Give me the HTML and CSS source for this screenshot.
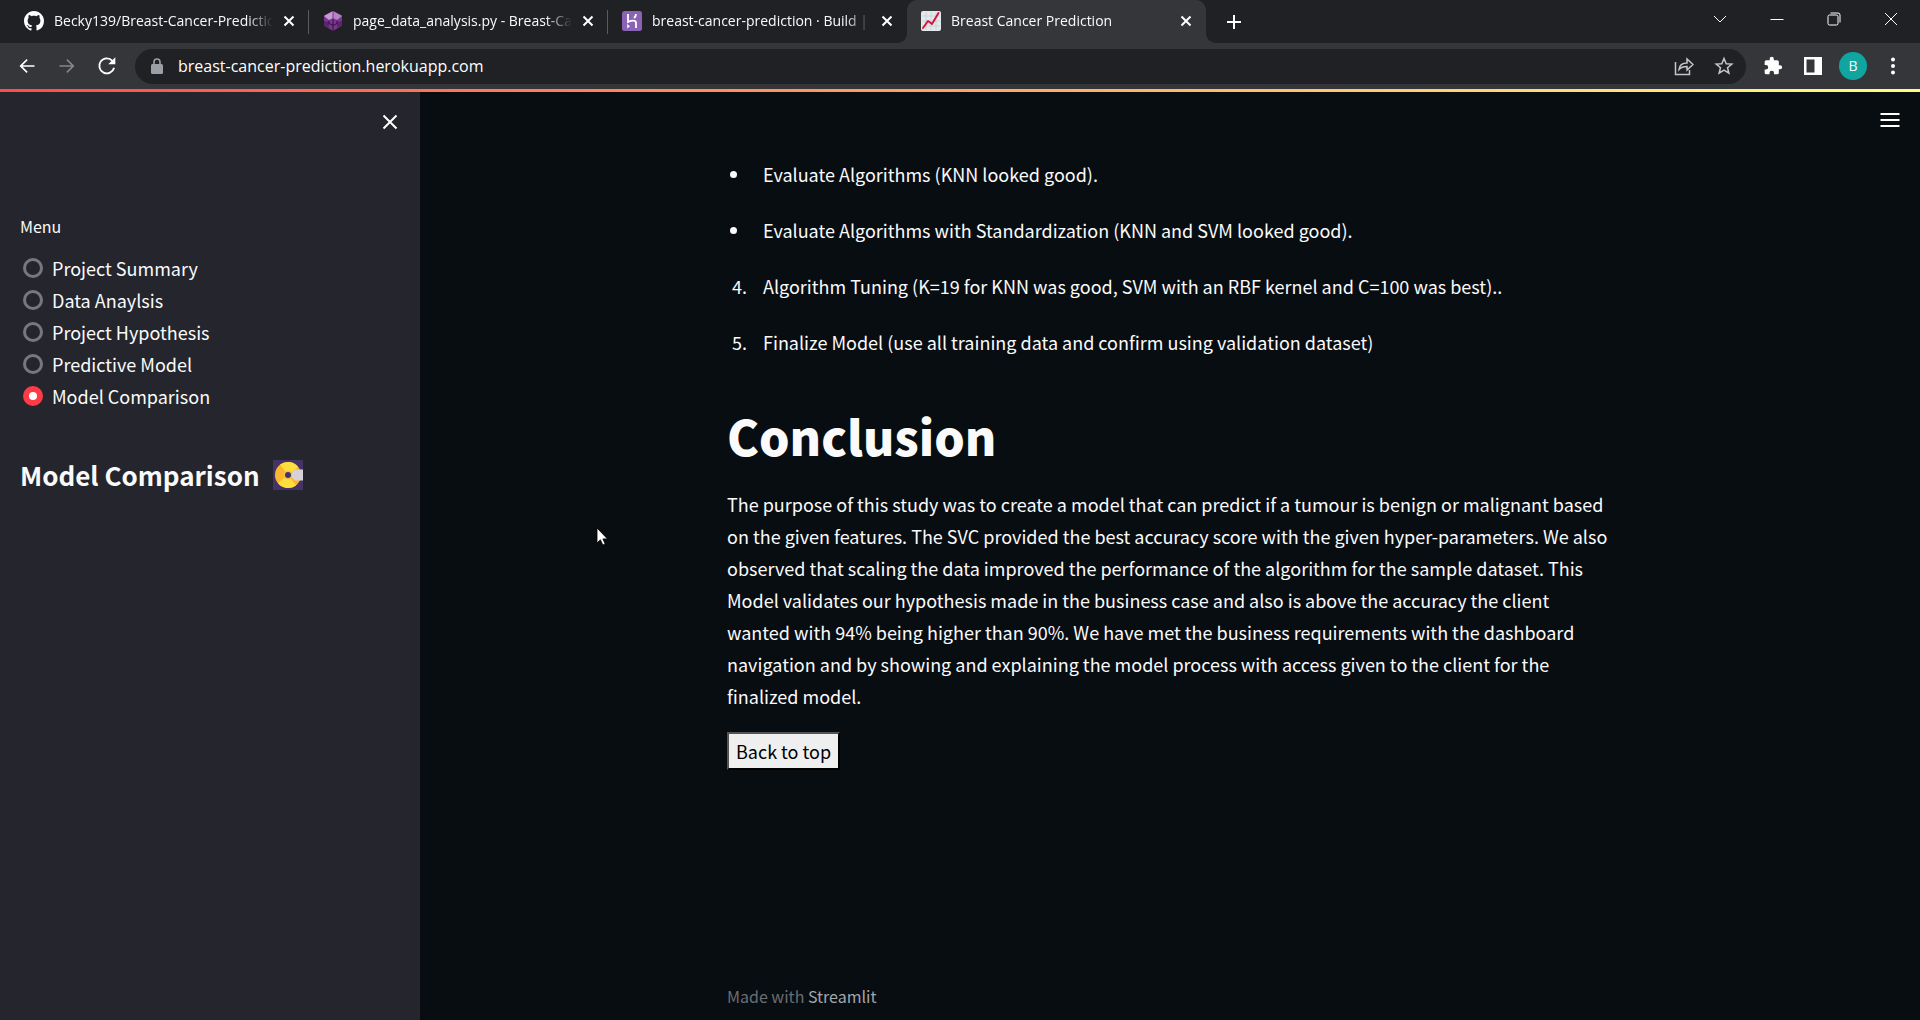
FILE: index.html
```html
<!DOCTYPE html>
<html lang="en">
<head>
<meta charset="utf-8">
<title>Breast Cancer Prediction</title>
<link rel="stylesheet" href="styles.css">
</head>
<body>
<header class="browser">
  <div class="tabstrip">
    <div class="tab">
      <svg class="favicon" viewBox="0 0 16 16" aria-hidden="true"><path fill="#fff" d="M8 0C3.58 0 0 3.58 0 8c0 3.54 2.29 6.53 5.47 7.59.4.07.55-.17.55-.38 0-.19-.01-.82-.01-1.49-2.01.37-2.53-.49-2.69-.94-.09-.23-.48-.94-.82-1.13-.28-.15-.68-.52-.01-.53.63-.01 1.08.58 1.23.82.72 1.21 1.87.87 2.33.66.07-.52.28-.87.51-1.07-1.78-.2-3.64-.89-3.64-3.95 0-.87.31-1.59.82-2.15-.08-.2-.36-1.02.08-2.12 0 0 .67-.21 2.2.82.64-.18 1.32-.27 2-.27s1.36.09 2 .27c1.53-1.04 2.2-.82 2.2-.82.44 1.1.16 1.92.08 2.12.51.56.82 1.27.82 2.15 0 3.07-1.87 3.75-3.65 3.95.29.25.54.73.54 1.48 0 1.07-.01 1.93-.01 2.2 0 .21.15.46.55.38A8.01 8.01 0 0 0 16 8c0-4.42-3.58-8-8-8z"/></svg>
      <span class="tab-title">Becky139/Breast-Cancer-Prediction</span>
      <button class="tab-close" aria-label="Close tab"><svg viewBox="0 0 12 12"><path d="M1.500 1.500l9 9M10.500 1.500l-9 9"/></svg></button>
    </div>
    <div class="tab">
      <svg class="favicon" viewBox="0 0 20 20" aria-hidden="true"><path fill="#7a3790" d="M10 0l9 4.500v10L10 20l-9-5.500v-10z"/><path fill="#c69ad2" d="M9.500 .3v7L6 9 1 5z"/><path fill="#b582c4" d="M10.500 .3v7L14 9l5-4z"/><path fill="#5b2370" d="M1 10l5 1v6L1 14zM19 10l-5 1v6l5-3z"/><path fill="none" stroke="#35123f" d="M10 8v12M6 9.500v3l4 2 4-2v-3"/></svg>
      <span class="tab-title">page_data_analysis.py - Breast-Cancer</span>
      <button class="tab-close" aria-label="Close tab"><svg viewBox="0 0 12 12"><path d="M1.500 1.500l9 9M10.500 1.500l-9 9"/></svg></button>
    </div>
    <div class="tab">
      <svg class="favicon" viewBox="0 0 20 20" aria-hidden="true"><rect width="20" height="20" rx="2.500" fill="#8b63b5"/><path fill="none" stroke="#fff" stroke-width="1.800" d="M6 3v8c3-1.500 8-2.500 8 1v5M14 3c0 2-1 3.200-2 4"/><path fill="#fff" d="M5.200 13l2.800 2.200-2.800 2.300z"/></svg>
      <span class="tab-title">breast-cancer-prediction · Build | Heroku</span>
      <button class="tab-close" aria-label="Close tab"><svg viewBox="0 0 12 12"><path d="M1.500 1.500l9 9M10.500 1.500l-9 9"/></svg></button>
    </div>
    <div class="tab tab-active">
      <svg class="favicon" viewBox="0 0 20 20" aria-hidden="true"><rect width="20" height="20" rx="2" fill="#e4e9ec"/><path stroke="#bccbd2" stroke-width=".6" d="M5 1v18M10 1v18M15 1v18M1 5h18M1 10h18M1 15h18"/><path fill="none" stroke="#d4183c" stroke-width="2" stroke-linejoin="round" stroke-linecap="round" d="M2 17l5-7 4 3 6.500-11"/></svg>
      <span class="tab-title">Breast Cancer Prediction</span>
      <button class="tab-close" aria-label="Close tab"><svg viewBox="0 0 12 12"><path d="M1.500 1.500l9 9M10.500 1.500l-9 9"/></svg></button>
    </div>
    <button class="new-tab" aria-label="New tab"><svg viewBox="0 0 16 16"><path d="M8 1v14M1 8h14"/></svg></button>
    <div class="window-controls">
      <button aria-label="Search tabs"><svg viewBox="0 0 14 14"><path d="M1 4l6 6 6-6"/></svg></button>
      <button aria-label="Minimize"><svg viewBox="0 0 14 14"><path d="M.5 7.500h13"/></svg></button>
      <button aria-label="Restore"><svg viewBox="0 0 14 14"><rect x="1" y="3" width="10" height="10" rx="1.500"/><path d="M3.500 1h7.500a2 2 0 0 1 2 2v7.500"/></svg></button>
      <button aria-label="Close"><svg viewBox="0 0 14 14"><path d="M1 1l12 12M13 1L1 13"/></svg></button>
    </div>
  </div>
  <div class="toolbar">
    <button class="tool" aria-label="Back"><svg viewBox="0 0 24 24"><path fill="#fff" d="M21 11H6.800l6-6L11.500 3.500 3 12l8.500 8.500 1.300-1.500-6-6H21z"/></svg></button>
    <button class="tool" aria-label="Forward"><svg viewBox="0 0 24 24"><path fill="#85868a" d="M3 11h14.200l-6-6 1.300-1.500L21 12l-8.500 8.500-1.300-1.500 6-6H3z"/></svg></button>
    <button class="tool" aria-label="Reload"><svg viewBox="0 0 24 24"><path fill="none" stroke="#fff" stroke-width="2.200" d="M20.500 14A9 9 0 1 1 18.500 5.800"/><path fill="#fff" d="M22 1.500v8.500h-8.500z"/></svg></button>
    <div class="omnibox">
      <svg class="lock" viewBox="0 0 12 16" aria-hidden="true"><rect y="6" width="12" height="10" rx="1.500" fill="#9aa0a6"/><path fill="none" stroke="#9aa0a6" stroke-width="1.600" d="M3 7V4a3 3 0 0 1 6 0v3"/></svg>
      <input class="address" type="text" aria-label="Address" value="breast-cancer-prediction.herokuapp.com">
      <button class="tool" aria-label="Share"><svg class="icon-line" viewBox="0 0 20 20"><path d="M1.500 6v12.500h14V14M5 13.500c.5-4.500 3.500-6.500 8-6.500V3L19 8.500 13 14v-3.500c-3.500 0-6 .8-8 3z"/></svg></button>
      <button class="tool" aria-label="Bookmark"><svg class="icon-line" viewBox="0 0 20 20"><path d="M10 2.500l2.200 5.200 5.600.4-4.300 3.600 1.400 5.500L10 14.200l-4.900 3 1.400-5.500-4.300-3.600 5.600-.4z"/></svg></button>
    </div>
    <button class="tool" aria-label="Extensions"><svg viewBox="0 0 24 24"><path fill="#fff" d="M20.500 11H19V7a2 2 0 0 0-2-2h-4V3.500a2.500 2.500 0 0 0-5 0V5H4a2 2 0 0 0-2 2v3.800h1.500a2.700 2.700 0 0 1 0 5.400H2V20a2 2 0 0 0 2 2h3.800v-1.500a2.700 2.700 0 0 1 5.400 0V22H17a2 2 0 0 0 2-2v-4h1.500a2.500 2.500 0 0 0 0-5z"/></svg></button>
    <button class="tool" aria-label="Side panel"><svg viewBox="0 0 20 20"><path fill="#fff" fill-rule="evenodd" d="M1 1h18v18H1zM3.500 3.500v13h8v-13z"/></svg></button>
    <button class="avatar" aria-label="Profile">B</button>
    <button class="tool" aria-label="More"><svg viewBox="0 0 20 20"><g fill="#fff"><circle cx="10" cy="3.500" r="2"/><circle cx="10" cy="10" r="2"/><circle cx="10" cy="16.500" r="2"/></g></svg></button>
  </div>
</header>

<div class="decoration"></div>

<div class="app">
  <aside class="sidebar">
    <button class="sidebar-close" aria-label="Close sidebar"><svg viewBox="0 0 16 16"><path d="M1.500 1.500l13 13M14.500 1.500l-13 13"/></svg></button>
    <fieldset class="menu">
      <legend>Menu</legend>
      <label><input type="radio" name="menu">Project Summary</label>
      <label><input type="radio" name="menu">Data Anaylsis</label>
      <label><input type="radio" name="menu">Project Hypothesis</label>
      <label><input type="radio" name="menu">Predictive Model</label>
      <label><input type="radio" name="menu" checked>Model Comparison</label>
    </fieldset>
    <h2 class="sidebar-title">Model Comparison
      <svg viewBox="0 0 30 30" aria-hidden="true"><rect width="30" height="30" rx="1" fill="#443466"/><circle cx="15" cy="15" r="13" fill="#fdb62f"/><path fill="#ffdf3c" d="M15 15L7 4.500A13 13 0 0 1 25 7zM15 15l8 10.500A13 13 0 0 1 5 23z"/><circle cx="15" cy="15" r="4.500" fill="#f4c14a"/><circle cx="15" cy="15" r="3" fill="#443466"/><path fill="#d5d3d8" d="M30 9.500h-8l-3 3v5l3 3h8z"/></svg>
    </h2>
  </aside>

  <main class="main">
    <button class="main-menu" aria-label="Main menu"><svg viewBox="0 0 20 16"><path d="M.5 2h19M.5 8h19M.5 14h19"/></svg></button>
    <div class="content">
      <ul class="steps">
        <li>Evaluate Algorithms (KNN looked good).</li>
        <li>Evaluate Algorithms with Standardization (KNN and SVM looked good).</li>
      </ul>
      <ol class="steps" start="4">
        <li>Algorithm Tuning (K=19 for KNN was good, SVM with an RBF kernel and C=100 was best)..</li>
        <li>Finalize Model (use all training data and confirm using validation dataset)</li>
      </ol>
      <h1>Conclusion</h1>
      <p>The purpose of this study was to create a model that can predict if a tumour is benign or malignant based on the given features. The SVC provided the best accuracy score with the given hyper-parameters. We also observed that scaling the data improved the performance of the algorithm for the sample dataset. This Model validates our hypothesis made in the business case and also is above the accuracy the client wanted with 94% being higher than 90%. We have met the business requirements with the dashboard navigation and by showing and explaining the model process with access given to the client for the finalized model.</p>
      <button class="to-top">Back to top</button>
    </div>
    <footer class="footer">Made with <a href="#">Streamlit</a></footer>
  </main>
</div>

<svg class="pointer" viewBox="0 0 12 19" aria-hidden="true"><path fill="#fff" stroke="#000" stroke-width=".8" d="M1 1v15l3.400-3.200L6.800 18l2.400-1-2.300-5.100h4.600z"/></svg>
</body>
</html>
```

FILE: styles.css
```css
* {
  box-sizing: border-box;
}

body {
  margin: 0;
  min-height: 100vh;
  display: flex;
  flex-direction: column;
  background: #080d12;
  color: #fafafa;
  font-family: "Noto Sans CJK SC", "Source Sans Pro", sans-serif;
  font-size: 18px;
  line-height: 32px;
}

button {
  padding: 0;
  border: 0;
  background: none;
  color: inherit;
  font: inherit;
}

svg {
  display: block;
}

/* Browser frame */

.browser {
  background: #202124;
  font-family: "Open Sans", sans-serif;
}

.tabstrip {
  display: flex;
  height: 43px;
  padding-left: 10px;
}

.tab {
  display: flex;
  align-items: center;
  width: 299px;
  padding: 0 14px 2px;
  gap: 10px;
  background: linear-gradient(#5a5b5e, #5a5b5e) right center / 1px 24px no-repeat;
}

.tab:nth-child(3) {
  background: none;
}

.tab-active {
  position: relative;
  background: #35363a;
  border-radius: 10px 10px 0 0;
}

.tab-active::before,
.tab-active::after {
  content: "";
  position: absolute;
  bottom: 0;
  width: 10px;
  height: 10px;
}

.tab-active::before {
  right: 100%;
  background: radial-gradient(circle at 0 0, transparent 10px, #35363a 10px);
}

.tab-active::after {
  left: 100%;
  background: radial-gradient(circle at 100% 0, transparent 10px, #35363a 10px);
}

.favicon {
  flex: none;
  width: 20px;
  height: 20px;
}

.tab-title {
  flex: 1;
  overflow: hidden;
  white-space: nowrap;
  font-size: 14px;
  line-height: 20px;
  mask-image: linear-gradient(to right, #000 88%, transparent);
}

.tab-close svg {
  width: 12px;
  height: 12px;
  fill: none;
  stroke: #fff;
  stroke-width: 2;
}

.new-tab {
  margin-left: 20px;
}

.new-tab svg {
  width: 16px;
  height: 16px;
  stroke: #fff;
  stroke-width: 2;
}

.window-controls {
  display: flex;
  height: 37px;
  margin-left: auto;
  padding-right: 1px;
}

.window-controls button {
  display: grid;
  place-items: center;
  width: 57px;
}

.window-controls svg {
  width: 14px;
  height: 14px;
  fill: none;
  stroke: #fff;
  stroke-width: 1;
}

.toolbar {
  display: flex;
  align-items: center;
  height: 46px;
  padding: 0 7px;
  background: #35363a;
}

.tool {
  display: grid;
  place-items: center;
  flex: none;
  width: 40px;
  height: 35px;
}

.tool svg {
  width: 20px;
  height: 20px;
}

.tool .icon-line {
  fill: none;
  stroke: #c4c6ca;
  stroke-width: 1.500;
}

.omnibox {
  display: flex;
  align-items: center;
  flex: 1;
  height: 35px;
  margin: 0 7px 0 8px;
  padding: 0 2px 0 16px;
  border-radius: 18px;
  background: #202124;
}

.lock {
  width: 12px;
  height: 16px;
}

.address {
  flex: 1;
  min-width: 0;
  padding: 0 0 0 15px;
  border: 0;
  outline: 0;
  background: none;
  color: #fff;
  font: 16px/24px "Open Sans", sans-serif;
}

.avatar {
  width: 28px;
  height: 28px;
  margin: 0 6px;
  border-radius: 50%;
  background: #10a5a0;
  font-size: 14px;
  line-height: 28px;
}

/* Application */

.decoration {
  height: 3px;
  background: linear-gradient(to right, #ff4b4b, #fffd80);
}

.app {
  flex: 1;
  display: flex;
}

.sidebar {
  display: flex;
  flex-direction: column;
  flex: none;
  width: 420px;
  padding: 20px;
  background: #25262d;
}

.sidebar-close {
  align-self: flex-end;
  display: grid;
  place-items: center;
  width: 20px;
  height: 20px;
}

.sidebar-close svg {
  width: 16px;
  height: 16px;
  stroke: #fff;
  stroke-width: 2;
}

.menu {
  display: flex;
  flex-direction: column;
  margin: 82px 0 0;
  padding: 0;
  border: 0;
}

.menu legend {
  margin-bottom: 14px;
  padding: 0;
  font-size: 16px;
  line-height: 24px;
}

.menu label {
  display: flex;
  align-items: center;
  gap: 9px;
  padding-left: 3px;
}

.menu input {
  appearance: none;
  width: 20px;
  height: 20px;
  margin: 0;
  border: 3px solid #77777f;
  border-radius: 50%;
}

.menu input:checked {
  border: 6px solid #ff3b46;
  background: #fff;
}

.sidebar-title {
  display: flex;
  align-items: center;
  gap: 13px;
  margin: 45px 0 0;
  font-size: 26px;
  line-height: 36px;
}

.sidebar-title svg {
  width: 30px;
  height: 30px;
}

.main {
  flex: 1;
  display: flex;
  flex-direction: column;
  align-items: center;
  padding: 20px 20px 8px;
}

.main-menu {
  align-self: flex-end;
  height: 16px;
}

.main-menu svg {
  width: 20px;
  height: 16px;
  stroke: #fff;
  stroke-width: 2;
}

.content {
  width: 100%;
  max-width: 886px;
  margin-top: 30px;
}

.steps {
  margin: 0 0 24px;
  padding: 0 0 0 24px;
}

.steps li {
  padding-left: 12px;
}

.steps li + li {
  margin-top: 24px;
}

h1 {
  margin: 44px 0 20px;
  font-size: 48px;
  font-weight: 900;
  line-height: 66px;
}

p {
  margin: 0 0 20px;
}

.to-top {
  padding: 1px 7px;
  border: 2px outset #000;
  background: #efefef;
  color: #000;
}

.footer {
  width: 100%;
  max-width: 886px;
  margin-top: auto;
  color: #6b6d72;
  font-size: 16px;
  line-height: 32px;
}

.footer a {
  color: #a5a6a9;
  text-decoration: none;
}

.pointer {
  position: absolute;
  top: 527px;
  left: 596px;
  width: 12px;
  height: 19px;
}
```
